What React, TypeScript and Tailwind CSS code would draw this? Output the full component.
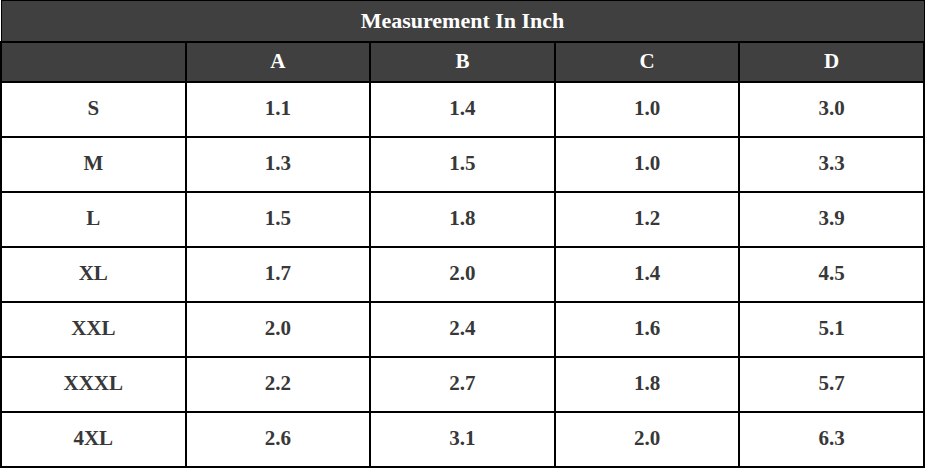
import React from "react";

const rows = [
  ["S", "1.1", "1.4", "1.0", "3.0"],
  ["M", "1.3", "1.5", "1.0", "3.3"],
  ["L", "1.5", "1.8", "1.2", "3.9"],
  ["XL", "1.7", "2.0", "1.4", "4.5"],
  ["XXL", "2.0", "2.4", "1.6", "5.1"],
  ["XXXL", "2.2", "2.7", "1.8", "5.7"],
  ["4XL", "2.6", "3.1", "2.0", "6.3"],
];

export default function App() {
  return (
    <div className="w-[925px] h-[468px] bg-white" style={{ fontFamily: '"Liberation Serif", "Times New Roman", serif' }}>
      <table className="w-[925px] border-collapse table-fixed text-[21px] font-bold">
        <thead>
          <tr className="h-[41px] bg-[#404040] text-white">
            <th colSpan={5} className="border border-black text-center font-bold text-[22px]">Measurement In Inch</th>
          </tr>
          <tr className="h-[40px] bg-[#404040] text-white">
            <th className="border-2 border-black w-[185px]"></th>
            <th className="border-2 border-black w-[185px]">A</th>
            <th className="border-2 border-black w-[185px]">B</th>
            <th className="border-2 border-black w-[185px]">C</th>
            <th className="border-2 border-black">D</th>
          </tr>
        </thead>
        <tbody className="text-[#383838]">
          {rows.map((r) => (
            <tr key={r[0]} className="h-[55px]">
              {r.map((c, i) => (
                <td key={i} className="border-2 border-black text-center">{c}</td>
              ))}
            </tr>
          ))}
        </tbody>
      </table>
    </div>
  );
}
